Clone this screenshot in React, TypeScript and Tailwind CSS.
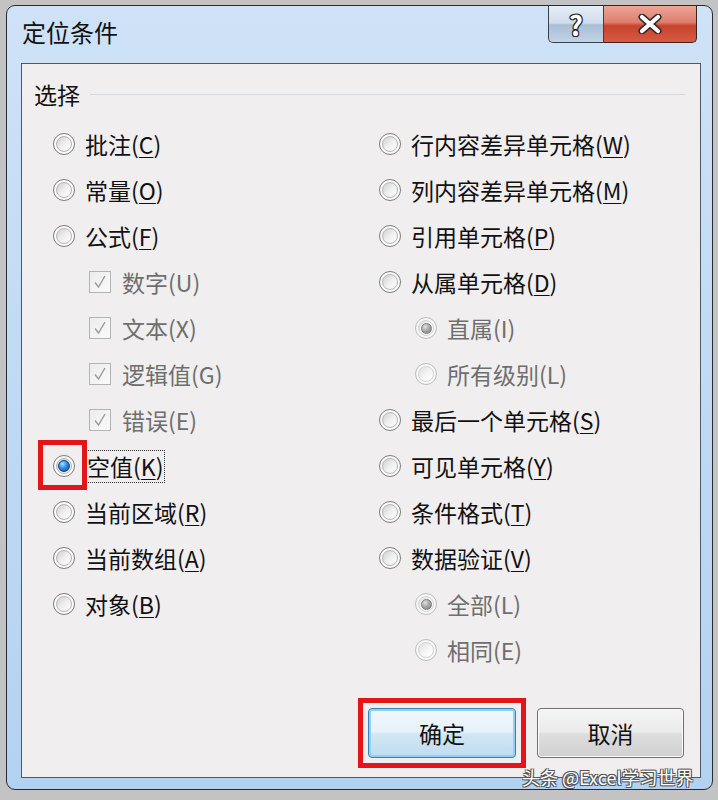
import React from "react";

const FONT = { fontFamily: '"Noto Sans CJK SC", "Noto Sans", sans-serif' };

type RadioKind = "off" | "offDisabled" | "onBlue" | "onGray";

function Radio({ kind }: { kind: RadioKind }) {
  const disabled = kind === "offDisabled" || kind === "onGray";
  return (
    <span
      className={
        "relative flex h-[22px] w-[22px] shrink-0 items-center justify-center rounded-full border " +
        (disabled
          ? "border-[#bdbdbd] bg-[#f7f7f7]"
          : "border-[#7b7b7b] bg-[#fbfbfb]")
      }
    >
      <span
        className={
          "flex h-[16px] w-[16px] items-center justify-center rounded-full border " +
          (disabled
            ? "border-[#d4d4d4] bg-[linear-gradient(135deg,#dedede,#f6f6f6_55%,#ffffff)]"
            : "border-[#b5b5b5] bg-[linear-gradient(135deg,#cfcfcf,#efefef_50%,#ffffff)]")
        }
      >
        {kind === "onBlue" && (
          <span className="h-[12px] w-[12px] rounded-full border border-[#0b3f7c] bg-[radial-gradient(circle_at_35%_30%,#a8e0ff,#2c8de6_45%,#0a4fa3)]" />
        )}
        {kind === "onGray" && (
          <span className="h-[11px] w-[11px] rounded-full border border-[#7e7e7e] bg-[radial-gradient(circle_at_35%_30%,#e0e0e0,#a5a5a5_50%,#7a7a7a)]" />
        )}
      </span>
    </span>
  );
}

function Check() {
  return (
    <span className="flex h-[22px] w-[22px] shrink-0 items-center justify-center border border-[#b4b4b4] bg-[linear-gradient(135deg,#ececec,#fafafa)]">
      <svg width="16" height="16" viewBox="0 0 16 16">
        <path d="M3 8.5 L6.5 13 L13 2" fill="none" stroke="#9a9a9a" strokeWidth="1.4" />
      </svg>
    </span>
  );
}

function Label({
  text,
  k,
  disabled,
}: {
  text: string;
  k: string;
  disabled?: boolean;
}) {
  return (
    <span className={"text-[23px] leading-[30px] whitespace-nowrap " + (disabled ? "text-[#6e6e6e]" : "text-[#111]")}>
      {text}(
      {disabled ? k : <span className="underline decoration-1 underline-offset-[3px]">{k}</span>})
    </span>
  );
}

function RadioRow({
  text,
  k,
  kind = "off",
  indent,
}: {
  text: string;
  k: string;
  kind?: RadioKind;
  indent?: boolean;
}) {
  const disabled = kind === "offDisabled" || kind === "onGray";
  return (
    <div className={"flex h-[46px] items-center gap-[10px] " + (indent ? "pl-[36px]" : "")}>
      <Radio kind={kind} />
      <Label text={text} k={k} disabled={disabled} />
    </div>
  );
}

function CheckRow({ text, k }: { text: string; k: string }) {
  return (
    <div className="flex h-[46px] items-center gap-[11px] pl-[36px]">
      <Check />
      <Label text={text} k={k} disabled />
    </div>
  );
}

export default function App() {
  return (
    <div
      className="relative h-[800px] w-[718px] overflow-hidden bg-[#c3c3c3] pl-[6px] pt-[5px]"
      style={FONT}
    >
      <div className="flex h-[785px] w-[707px] flex-col rounded-[9px] border border-[#272b31] bg-[linear-gradient(180deg,#cfe2f7_0%,#c2dbf5_40%,#b3d2f1_100%)] pb-[11px] pl-[14px] pr-[11px]">
        {/* title bar */}
        <div className="flex h-[57px] shrink-0 items-start justify-between">
          <div className="ml-[1px] mt-[10px] text-[24px] leading-[32px] text-[#111]">定位条件</div>
          <div className="mr-[4px] flex h-[37px]">
            <div className="flex w-[56px] items-center justify-center rounded-bl-[5px] border border-t-0 border-[#3b4048] bg-[linear-gradient(180deg,#e6eef7_0%,#cfdcea_48%,#a9bed5_52%,#c2d3e5_100%)]">
              <span className="text-[27px] font-bold leading-none text-white [text-shadow:-1px_-1px_0_#2a2a2a,1px_-1px_0_#2a2a2a,-1px_1px_0_#2a2a2a,1px_1px_0_#2a2a2a,0_1px_0_#2a2a2a,1px_0_0_#2a2a2a,-1px_0_0_#2a2a2a,0_-1px_0_#2a2a2a]">
                ?
              </span>
            </div>
            <div className="flex w-[93px] items-center justify-center rounded-br-[5px] border border-l-0 border-t-0 border-[#3b2420] bg-[linear-gradient(180deg,#eba497_0%,#df7f6f_45%,#c8432e_55%,#d65a42_100%)]">
              <svg width="26" height="20" viewBox="0 0 26 20">
                <path d="M5 3 L21 17 M21 3 L5 17" stroke="#2a2a2a" strokeWidth="7" strokeLinecap="round" />
                <path d="M5 3 L21 17 M21 3 L5 17" stroke="#ffffff" strokeWidth="4.2" strokeLinecap="round" />
              </svg>
            </div>
          </div>
        </div>

        {/* content */}
        <div className="flex h-[715px] shrink-0 flex-col border border-[#4e5967] bg-[#f0eeef]">
          <div className="ml-[12px] mr-[15px] mt-[16px]">
            <div className="flex h-[28px] items-center">
              <span className="text-[23px] leading-[28px] text-[#111]">选择</span>
              <span className="ml-[10px] h-px flex-1 bg-[#d6d9dd]" />
            </div>
            <div className="mt-[13px] flex pl-[19px]">
              <div className="flex w-[326px] flex-col">
                <RadioRow text="批注" k="C" />
                <RadioRow text="常量" k="O" />
                <RadioRow text="公式" k="F" />
                <CheckRow text="数字" k="U" />
                <CheckRow text="文本" k="X" />
                <CheckRow text="逻辑值" k="G" />
                <CheckRow text="错误" k="E" />
                <div className="flex h-[46px] items-center gap-[10px]">
                  <span className="relative">
                    <Radio kind="onBlue" />
                    <span className="absolute left-[-15px] top-[-15px] h-[50px] w-[49px] border-[5px] border-[#e3151b]" />
                  </span>
                  <span className="border border-dotted border-[#333] px-[1px] text-[23px] leading-[31px] text-[#111]">
                    空值(<span className="underline decoration-1 underline-offset-[3px]">K</span>)
                  </span>
                </div>
                <RadioRow text="当前区域" k="R" />
                <RadioRow text="当前数组" k="A" />
                <RadioRow text="对象" k="B" />
              </div>
              <div className="flex flex-col">
                <RadioRow text="行内容差异单元格" k="W" />
                <RadioRow text="列内容差异单元格" k="M" />
                <RadioRow text="引用单元格" k="P" />
                <RadioRow text="从属单元格" k="D" />
                <RadioRow text="直属" k="I" kind="onGray" indent />
                <RadioRow text="所有级别" k="L" kind="offDisabled" indent />
                <RadioRow text="最后一个单元格" k="S" />
                <RadioRow text="可见单元格" k="Y" />
                <RadioRow text="条件格式" k="T" />
                <RadioRow text="数据验证" k="V" />
                <RadioRow text="全部" k="L" kind="onGray" indent />
                <RadioRow text="相同" k="E" kind="offDisabled" indent />
              </div>
            </div>
          </div>

          <div className="mt-[35px] flex justify-end gap-[21px] pr-[16px]">
            <div className="relative">
              <button className="flex h-[50px] w-[148px] items-center justify-center rounded-[4px] border border-[#3c7fb1] bg-[linear-gradient(180deg,#f2f8fc_0%,#e6f1f9_48%,#d2e6f3_52%,#bfdcef_100%)] text-[23px] text-[#111] shadow-[inset_0_0_0_2px_#8fd0f3]">
                确定
              </button>
              <span className="absolute left-[-10px] top-[-10px] h-[70px] w-[168px] border-[5px] border-[#e3151b]" />
            </div>
            <button className="flex h-[50px] w-[147px] items-center justify-center rounded-[4px] border border-[#707070] bg-[linear-gradient(180deg,#f4f4f4_0%,#ebebeb_48%,#dddddd_52%,#d0d0d0_100%)] text-[23px] text-[#111] shadow-[inset_0_0_0_1px_#fbfbfb]">
              取消
            </button>
          </div>
        </div>
      </div>

      <div className="absolute left-[522px] top-[765px] text-[18px] leading-[24px] text-white [text-shadow:-1px_-1px_0_#555,1px_-1px_0_#555,-1px_1px_0_#555,1px_1px_0_#555]">
        头条 @Excel学习世界
      </div>
    </div>
  );
}
